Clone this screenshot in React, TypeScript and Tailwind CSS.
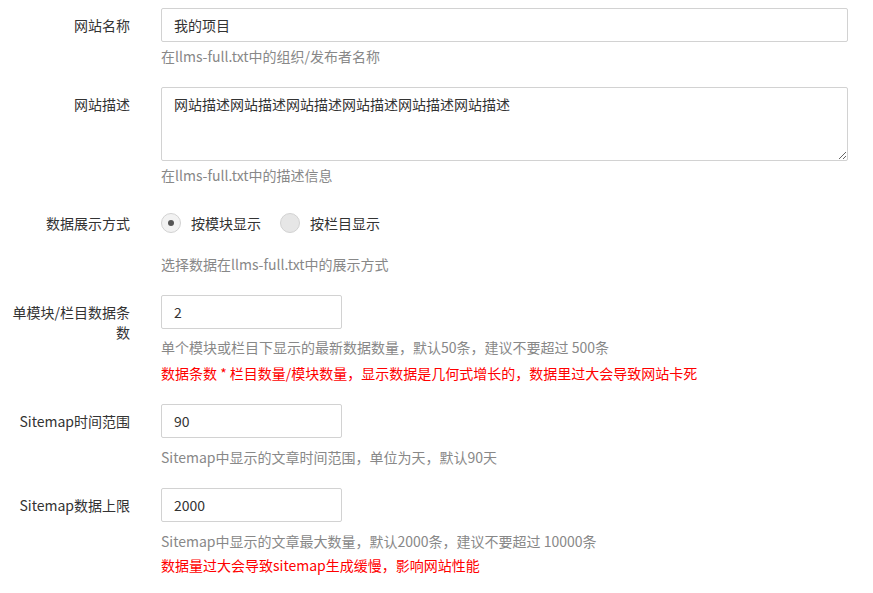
import React from "react";

const font = { fontFamily: '"Noto Sans CJK SC", "Noto Sans", sans-serif' };

function Label({ children }: { children: React.ReactNode }) {
  return (
    <div className="w-[130px] shrink-0 pl-[10px] pt-[7px] text-right text-[14px] leading-[20px] text-[#333]">
      {children}
    </div>
  );
}

function Radio({ checked, label }: { checked?: boolean; label: string }) {
  return (
    <div className="flex items-center">
      {checked ? (
        <span className="flex h-[20px] w-[20px] items-center justify-center rounded-full border border-[#d2d2d2] bg-[#f2f2f2]">
          <span className="h-[6px] w-[6px] rounded-full bg-[#555]" />
        </span>
      ) : (
        <span className="h-[20px] w-[20px] rounded-full border border-[#d2d2d2] bg-[#e6e6e6]" />
      )}
      <span className="ml-[10px] text-[14px] leading-[20px] text-[#333]">{label}</span>
    </div>
  );
}

const inputCls =
  "h-[34px] rounded-[2px] border border-[#d2d2d2] bg-white pl-[12px] text-[14px] text-[#333] outline-none";

export default function App() {
  return (
    <div style={font} className="min-h-[593px] bg-white pr-[25px] pt-[8px]">
      {/* 网站名称 */}
      <div className="flex">
        <Label>网站名称</Label>
        <div className="ml-[31px] flex-1">
          <input className={inputCls + " w-full"} defaultValue="我的项目" />
          <div className="mt-[4px] text-[14px] leading-[20px] text-[#888]">在llms-full.txt中的组织/发布者名称</div>
        </div>
      </div>

      {/* 网站描述 */}
      <div className="mt-[21px] flex">
        <Label>网站描述</Label>
        <div className="ml-[31px] flex-1">
          <textarea
            className="block h-[74px] w-full rounded-[2px] border border-[#d2d2d2] bg-white px-[12px] py-[6px] text-[14px] leading-[20px] text-[#333] outline-none"
            defaultValue="网站描述网站描述网站描述网站描述网站描述网站描述"
          />
          <div className="mt-[4px] text-[14px] leading-[20px] text-[#888]">在llms-full.txt中的描述信息</div>
        </div>
      </div>

      {/* 数据展示方式 */}
      <div className="mt-[21px] flex">
        <Label>数据展示方式</Label>
        <div className="ml-[31px] flex-1">
          <div className="flex h-[34px] items-center gap-[19px]">
            <Radio checked label="按模块显示" />
            <Radio label="按栏目显示" />
          </div>
          <div className="mt-[14px] text-[14px] leading-[20px] text-[#888]">选择数据在llms-full.txt中的展示方式</div>
        </div>
      </div>

      {/* 单模块/栏目数据条数 */}
      <div className="mt-[21px] flex">
        <Label>单模块/栏目数据条数</Label>
        <div className="ml-[31px] flex-1">
          <input className={inputCls + " w-[181px]"} defaultValue="2" />
          <div className="mt-[8px] text-[14px] leading-[20px] text-[#888]">单个模块或栏目下显示的最新数据数量，默认50条，建议不要超过 500条</div>
          <div className="mt-[6px] text-[14px] leading-[20px] text-[#f00]">数据条数 * 栏目数量/模块数量，显示数据是几何式增长的，数据里过大会导致网站卡死</div>
        </div>
      </div>

      {/* Sitemap时间范围 */}
      <div className="mt-[21px] flex">
        <Label>Sitemap时间范围</Label>
        <div className="ml-[31px] flex-1">
          <input className={inputCls + " w-[181px]"} defaultValue="90" />
          <div className="mt-[9px] text-[14px] leading-[20px] text-[#888]">Sitemap中显示的文章时间范围，单位为天，默认90天</div>
        </div>
      </div>

      {/* Sitemap数据上限 */}
      <div className="mt-[21px] flex">
        <Label>Sitemap数据上限</Label>
        <div className="ml-[31px] flex-1">
          <input className={inputCls + " w-[181px]"} defaultValue="2000" />
          <div className="mt-[9px] text-[14px] leading-[20px] text-[#888]">Sitemap中显示的文章最大数量，默认2000条，建议不要超过 10000条</div>
          <div className="mt-[4px] text-[14px] leading-[20px] text-[#f00]">数据量过大会导致sitemap生成缓慢，影响网站性能</div>
        </div>
      </div>
    </div>
  );
}
